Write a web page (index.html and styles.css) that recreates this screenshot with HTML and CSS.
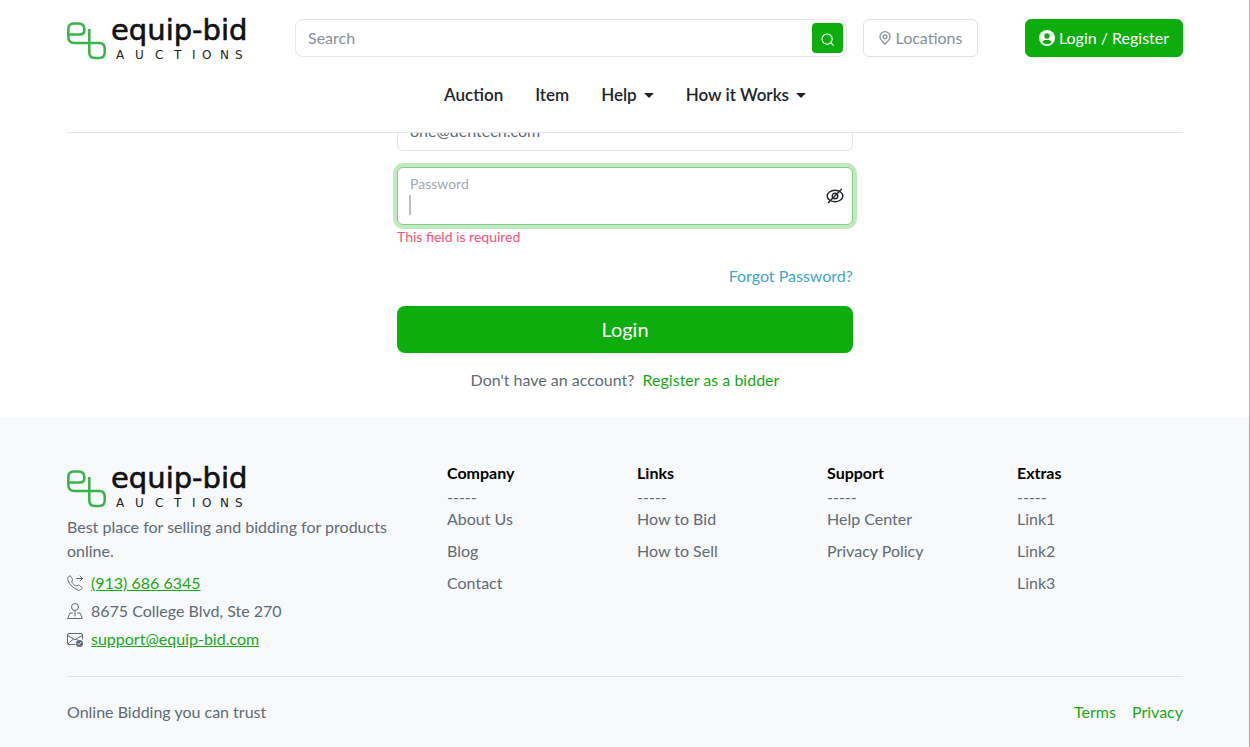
FILE: index.html
```html
<!DOCTYPE html>
<html lang="en">
<head>
<meta charset="utf-8">
<meta name="viewport" content="width=device-width, initial-scale=1">
<title>Login | Equip-Bid Auctions</title>
<link rel="stylesheet" href="styles.css">
</head>
<body>
<header class="site-header">
  <div class="container">
    <div class="header-inner">
      <div class="header-top">
        <a class="logo" href="#" aria-label="Equip-Bid Auctions home">
          <svg width="182" height="46" viewBox="0 0 182 46">
            <path class="logo-mark" d="M1.300 19.500H13Q17.300 19.500 17.300 15.500V14Q17.300 8.500 11.500 8.500H7Q1.300 8.500 1.300 14V22Q1.300 28 7.500 28H32Q37.700 28 37.700 33.500V37.500Q37.700 43 32 43H28Q22.300 43 22.300 37.500V14"/>
            <text class="logo-name" x="44" y="25">equip-bid</text>
            <text class="logo-sub" y="44" x="49 68 88 107 125 135 153 168">AUCTIONS</text>
          </svg>
        </a>
        <form class="search">
          <input class="search-input" type="search" placeholder="Search" aria-label="Search">
          <button class="search-button" type="button" aria-label="Search">
            <svg width="13" height="13" viewBox="0 0 16 16" fill="none" stroke="currentColor" stroke-width="1.4" stroke-linecap="round"><circle cx="7.5" cy="7.5" r="6.3"/><path d="M12 12l3.2 3.2"/></svg>
          </button>
        </form>
        <button class="button button-outline" type="button">
          <svg width="12" height="14" viewBox="0 0 12 14" fill="none" stroke="currentColor" stroke-width="1.3"><path d="M6 13.2C3.2 10.6 1 8.200 1 5.700a5 5 0 0 1 10 0c0 2.500-2.200 4.900-5 7.500z"/><circle cx="6" cy="5.700" r="1.900"/></svg>
          Locations
        </button>
        <a class="button button-solid" href="#">
          <svg width="16" height="16" viewBox="0 0 16 16"><circle cx="8" cy="8" r="8" fill="#fff"/><circle cx="8" cy="6" r="2.700" fill="#0dad0d"/><path d="M3.300 12.200C4 10.500 5.500 9.900 6.600 9.900h2.800c1.100 0 2.600.6 3.300 2.300A6.300 6.300 0 0 1 8 14.200a6.300 6.300 0 0 1-4.700-2z" fill="#0dad0d"/></svg>
          Login / Register
        </a>
      </div>
      <nav class="main-nav">
        <a href="#">Auction</a>
        <a href="#">Item</a>
        <a class="has-menu" href="#">Help</a>
        <a class="has-menu" href="#">How it Works</a>
      </nav>
    </div>
  </div>
</header>

<main class="login">
  <form class="login-form">
    <div class="field">
      <label class="field-label" for="email">Email</label>
      <input class="field-input" id="email" type="email" value="one@dentech.com">
    </div>
    <div class="field">
      <label class="field-label" for="password">Password</label>
      <input class="field-input is-focused" id="password" type="password">
      <span class="caret"></span>
      <button class="reveal" type="button" aria-label="Show password">
        <svg width="18" height="16" viewBox="0 0 18 16" fill="none" stroke="currentColor" stroke-width="1.400" stroke-linecap="round"><ellipse cx="9" cy="8" rx="7.800" ry="5.700"/><circle cx="9" cy="8" r="2.800"/><path d="M2.500 14.600L15.500 1.300"/></svg>
      </button>
    </div>
    <p class="error">This field is required</p>
    <a class="forgot" href="#">Forgot Password?</a>
    <button class="submit" type="button">Login</button>
    <p class="register">Don't have an account? <a href="#">Register as a bidder</a></p>
  </form>
</main>

<footer class="site-footer">
  <div class="container">
    <div class="footer-grid">
      <section class="about">
        <a class="logo" href="#" aria-label="Equip-Bid Auctions home">
          <svg width="182" height="46" viewBox="0 0 182 46">
            <path class="logo-mark" d="M1.300 19.500H13Q17.300 19.500 17.300 15.500V14Q17.300 8.500 11.500 8.500H7Q1.300 8.500 1.300 14V22Q1.300 28 7.500 28H32Q37.700 28 37.700 33.500V37.500Q37.700 43 32 43H28Q22.300 43 22.300 37.500V14"/>
            <text class="logo-name" x="44" y="25">equip-bid</text>
            <text class="logo-sub" y="44" x="49 68 88 107 125 135 153 168">AUCTIONS</text>
          </svg>
        </a>
        <p class="tagline">Best place for selling and bidding for products online.</p>
        <ul class="contact">
          <li>
            <svg width="16" height="16" viewBox="0 0 16 16" fill="none" stroke="currentColor" stroke-linecap="round" stroke-linejoin="round"><path d="M3.700 1.200a1 1 0 0 0-1.500-.1L1.200 2.200C.6 2.800.4 3.600.7 4.400a17.600 17.600 0 0 0 4.100 6.700 17.600 17.600 0 0 0 6.700 4.200c.8.200 1.600 0 2.200-.5l1.100-1.100a1 1 0 0 0-.1-1.500l-2.400-1.800a1 1 0 0 0-.9-.2l-2.200.6a1.500 1.500 0 0 1-1.400-.4L5.300 8a1.500 1.500 0 0 1-.4-1.400l.6-2.200a1 1 0 0 0-.2-.9z"/><path d="M9.500 3.500h6M13 1l2.500 2.500L13 6"/></svg>
            <a href="#">(913) 686 6345</a>
          </li>
          <li>
            <svg width="16" height="16" viewBox="0 0 16 16" fill="none" stroke="currentColor" stroke-linecap="round" stroke-linejoin="round"><circle cx="8" cy="4" r="3.500"/><path d="M8 7.500V13M5.500 10H3L.6 15.500h14.800L13 10h-2.500"/></svg>
            <span>8675 College Blvd, Ste 270</span>
          </li>
          <li>
            <svg width="16" height="16" viewBox="0 0 16 16" fill="none" stroke="currentColor" stroke-linecap="round" stroke-linejoin="round"><path d="M8 13.500H2A1.500 1.500 0 0 1 .5 12V4A1.500 1.500 0 0 1 2 2.500h12A1.500 1.500 0 0 1 15.500 4v4M.7 4.500L8 8.700l7.300-4.200M.8 12.800l5.500-4.600M9.500 8l1 1"/><circle cx="12.500" cy="12.500" r="3.500" fill="currentColor" stroke="none"/><path class="tick" d="M11 12.600l1.100 1.100 1.900-2.400"/></svg>
            <a href="#">support@equip-bid.com</a>
          </li>
        </ul>
      </section>
      <section class="links">
        <h2>Company</h2>
        <p class="dashes">-----</p>
        <ul><li><a href="#">About Us</a></li><li><a href="#">Blog</a></li><li><a href="#">Contact</a></li></ul>
      </section>
      <section class="links">
        <h2>Links</h2>
        <p class="dashes">-----</p>
        <ul><li><a href="#">How to Bid</a></li><li><a href="#">How to Sell</a></li></ul>
      </section>
      <section class="links">
        <h2>Support</h2>
        <p class="dashes">-----</p>
        <ul><li><a href="#">Help Center</a></li><li><a href="#">Privacy Policy</a></li></ul>
      </section>
      <section class="links">
        <h2>Extras</h2>
        <p class="dashes">-----</p>
        <ul><li><a href="#">Link1</a></li><li><a href="#">Link2</a></li><li><a href="#">Link3</a></li></ul>
      </section>
    </div>
    <div class="footer-bottom">
      <span>Online Bidding you can trust</span>
      <nav class="legal"><a href="#">Terms</a><a href="#">Privacy</a></nav>
    </div>
  </div>
</footer>
</body>
</html>
```
FILE: styles.css
```css
* { box-sizing: border-box; }

body {
  margin: 0;
  background: #fff;
  color: #606b75;
  font-family: "Lato", "Open Sans", sans-serif;
  font-size: 16px;
  line-height: 24px;
}

/* window edge */
body::after {
  content: "";
  position: fixed;
  top: 0;
  right: 0;
  bottom: 0;
  z-index: 3;
  width: 1px;
  background: #adadad;
}

p, ul, h2 { margin: 0; padding: 0; }
ul { list-style: none; }
a { color: #18a818; text-decoration: none; }
button, input { font: inherit; }

.container { max-width: 1140px; margin: 0 auto; padding: 0 12px; }

.logo { display: block; flex: none; }
.logo svg { display: block; overflow: visible; }
.logo-mark { fill: none; stroke: #37b34a; stroke-width: 2.5; }
.logo-name { font-family: "DejaVu Sans", sans-serif; font-size: 29px; fill: #111; stroke: #111; stroke-width: 0.6; }
.logo-sub { font-family: "DejaVu Sans", sans-serif; font-size: 12px; fill: #222; }

.site-header { position: sticky; top: 0; z-index: 2; background: #fff; }
.header-inner { padding-top: 15px; border-bottom: 1px solid #e3e6ea; }
.header-top { display: flex; align-items: center; }

.search { position: relative; flex: 1; margin: 0 16px 0 46px; }
.search-input {
  display: block;
  width: 100%;
  height: 38px;
  padding: 0 48px 2px 12px;
  border: 1px solid #e6e8ea;
  border-radius: 8px;
  background: #fff;
  outline: 0;
}
.search-input::placeholder { color: #87919a; opacity: 1; }
.search-button {
  position: absolute;
  top: 4px;
  right: 4px;
  display: flex;
  align-items: center;
  justify-content: center;
  width: 31px;
  height: 30px;
  padding: 3px 0 0;
  border: 0;
  border-radius: 4px;
  background: #0dad0d;
  color: #fff;
}

.button {
  display: flex;
  align-items: center;
  justify-content: center;
  gap: 5px;
  height: 38px;
  padding: 0 12px;
  border: 1px solid #dfe1e3;
  border-radius: 6px;
  background: #fff;
  white-space: nowrap;
}
.button-outline { min-width: 115px; color: #87919a; }
.button-solid { min-width: 158px; gap: 4px; margin-left: 47px; border-color: #0dad0d; background: #0dad0d; color: #fff; }

.main-nav { display: flex; justify-content: center; gap: 32px; padding: 22px 0 25px; }
.main-nav a { display: flex; align-items: center; gap: 7px; color: #212529; font-size: 17px; font-weight: 600; }
.has-menu::after {
  content: "";
  border: 5px solid transparent;
  border-top-color: #212529;
  border-bottom: 0;
}

.login { margin-top: -40px; padding: 0 12px 25px; }
.login-form { display: flex; flex-direction: column; max-width: 456px; margin: 0 auto; }
.field { position: relative; }
.field + .field { margin-top: 16px; }
.field-label { position: absolute; top: 7px; left: 13px; color: #a2a9af; font-size: 14px; line-height: 20px; }
.field-input {
  display: block;
  width: 100%;
  height: 58px;
  padding: 18px 48px 2px 12px;
  border: 1px solid #e0e5ea;
  border-radius: 6px;
  background: #fff;
  color: #606b75;
  outline: 0;
}
.field-input.is-focused { border-color: #86d086; box-shadow: 0 0 0 4px #c0eac0; }
.caret { position: absolute; top: 28px; left: 12px; width: 2px; height: 20px; background: #b9bec2; }
.reveal { position: absolute; top: 21px; right: 9px; padding: 0; border: 0; background: none; color: #212529; }
.reveal svg { display: block; }
.error { color: #f8527c; font-size: 14px; }
.forgot { align-self: flex-end; margin-top: 15px; color: #45a5c8; }
.submit {
  height: 47px;
  margin-top: 18px;
  padding: 0 0 2px;
  border: 0;
  border-radius: 8px;
  background: #0dad0d;
  color: #fff;
  font-size: 20px;
}
.register { margin-top: 15px; text-align: center; }
.register a { margin-left: 4px; }

.site-footer { background: #f8f9fb; }
.footer-grid { display: grid; grid-template-columns: 2fr 1fr 1fr 1fr 1fr; margin-right: -24px; padding: 46px 0 25px; }
.tagline { margin-top: 6px; padding-right: 24px; }
.contact { display: grid; gap: 4px; margin-top: 8px; }
.contact li { display: flex; align-items: center; gap: 8px; }
.contact a { text-decoration: underline; }
.tick { stroke: #f8f9fb; }
.links h2 { margin-top: -3px; color: #000; font-size: 16px; font-weight: 700; line-height: 26px; }
.links ul { display: grid; gap: 8px; }
.links a { color: #606b75; }
.dashes { line-height: 21px; }
.footer-bottom {
  display: flex;
  justify-content: space-between;
  padding: 23px 0;
  border-top: 1px solid #e0e3e6;
}
.legal { display: flex; gap: 16px; }
```
